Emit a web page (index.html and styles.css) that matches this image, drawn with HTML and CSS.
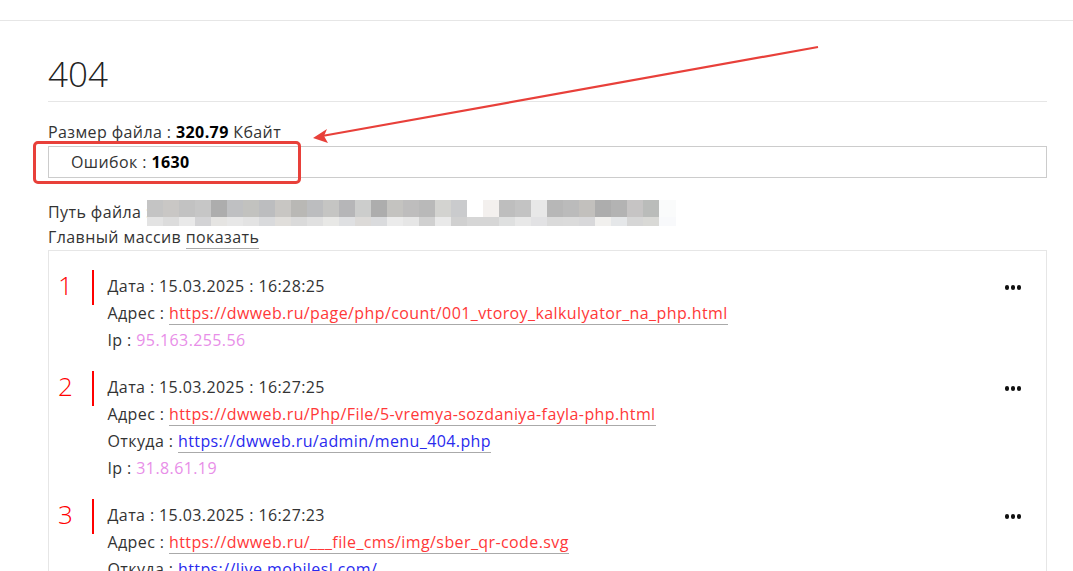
FILE: index.html
```html
<!DOCTYPE html>
<html lang="ru">
<head>
  <meta charset="UTF-8" />
  <title>404 — журнал ошибок</title>
  <link rel="stylesheet" href="styles.css">
</head>
<body>
  <div class="topbar"></div>

  <div class="page">
    <h1 class="title">404</h1>

    <div class="line">Размер файла : <b>320.79</b> Кбайт</div>
    <div class="errors">Ошибок : <b>1630</b></div>

    <div class="line path">Путь файла : <span class="blurred"></span></div>
    <div class="line">Главный массив <a class="show" href="#">показать</a></div>

    <div class="list">
      <div class="item">
        <div class="num">1</div>
        <div class="bar"></div>
        <div class="info">
          <div class="row">Дата : 15.03.2025 : 16:28:25</div>
          <div class="row">Адрес : <a class="addr" href="#">https://dwweb.ru/page/php/count/001_vtoroy_kalkulyator_na_php.html</a></div>
          <div class="row">Ip : <span class="ip">95.163.255.56</span></div>
        </div>
        <div class="more"><i></i><i></i><i></i></div>
      </div>

      <div class="item">
        <div class="num">2</div>
        <div class="bar"></div>
        <div class="info">
          <div class="row">Дата : 15.03.2025 : 16:27:25</div>
          <div class="row">Адрес : <a class="addr" href="#">https://dwweb.ru/Php/File/5-vremya-sozdaniya-fayla-php.html</a></div>
          <div class="row">Откуда : <a class="from" href="#">https://dwweb.ru/admin/menu_404.php</a></div>
          <div class="row">Ip : <span class="ip">31.8.61.19</span></div>
        </div>
        <div class="more"><i></i><i></i><i></i></div>
      </div>

      <div class="item">
        <div class="num">3</div>
        <div class="bar"></div>
        <div class="info">
          <div class="row">Дата : 15.03.2025 : 16:27:23</div>
          <div class="row">Адрес : <a class="addr" href="#">https://dwweb.ru/___file_cms/img/sber_qr-code.svg</a></div>
          <div class="row">Откуда : <a class="from" href="#">https://live.mobilesl.com/</a></div>
          <div class="row">Ip : <span class="ip">5.255.231.98</span></div>
        </div>
        <div class="more"><i></i><i></i><i></i></div>
      </div>
    </div>
  </div>

  <!-- пометки поверх скриншота -->
  <div class="mark-box"></div>
  <svg class="mark-arrow" width="1073" height="200" viewBox="0 0 1073 200">
    <line x1="818" y1="47" x2="322" y2="136" stroke="#e8403a" stroke-width="2.2" />
    <path d="M313 138 L327 129 L324 136 L328 143 Z" fill="#e8403a" />
  </svg>
</body>
</html>
```

FILE: styles.css
```css
body {
  margin: 0;
  font-family: "Open Sans", sans-serif;
  font-size: 16px;
  letter-spacing: 0.4px;
  color: #333;
  background: #fff;
}
a {
  text-decoration: none;
}
.topbar {
  height: 20px;
  border-bottom: 1px solid #e6e6e6;
}
.page {
  padding: 0 26px 0 48px;
}
.title {
  margin: 34px 0 0;
  padding-bottom: 8px;
  font-size: 35px;
  font-weight: 300;
  letter-spacing: 0;
  line-height: 38px;
  color: #222;
  border-bottom: 1px solid #e6e6e6;
}
.line {
  line-height: 25px;
}
.title + .line {
  margin-top: 18px;
}
.line b, .errors b {
  font-weight: 700;
  color: #000;
}
.errors {
  margin-top: 1px;
  height: 30px;
  line-height: 30px;
  padding-left: 22px;
  border: 1px solid #ccc;
}
.path {
  margin-top: 22px;
  height: 25px;
  display: flex;
  align-items: center;
}
.blurred {
  flex-shrink: 0;
  width: 529px;
  height: 26px;
  margin-left: -4px;
  background:
    linear-gradient(to right,
      #e3e3e3 0 16px, #dcdcdc 16px 32px, #e9e9e9 32px 48px, #d3d3d5 48px 64px,
      #e5e4e2 64px 80px, #e7e7e7 80px 96px, #e3e3e3 96px 112px, #d9dadc 112px 128px,
      #e0dedb 128px 144px, #dadada 144px 160px, #e0e0e0 160px 176px, #e8e8e6 176px 192px,
      #dfe0e2 192px 208px, #dcdad8 208px 224px, #dadbdd 224px 240px, #ebebeb 240px 256px,
      #e6e6e6 256px 272px, #d0d0d0 272px 288px, #e9e9e9 288px 304px, #d0d0d0 304px 320px,
      #d6d6d6 320px 352px, #dfe0e0 352px 368px, #e8e8e8 368px 384px, #e2e2e4 384px 400px,
      #dadada 400px 416px, #dbdbdb 416px 432px, #d8d8da 432px 448px, #f1f0ee 448px 464px,
      #e5e7e9 464px 480px, #d6d6d6 480px 496px, #d9d9d6 496px 512px, #f8f9fb 512px 529px)
      bottom / 100% 9px no-repeat,
    linear-gradient(to right,
      #c4c4c4 0 16px, #c9c7c5 16px 32px, #c2c2c2 32px 48px, #c6c6c6 48px 64px,
      #adadad 64px 80px, #bfc0c2 80px 96px, #c2c2bf 96px 112px, #bcbdbf 112px 128px,
      #c8c6c3 128px 144px, #b9b8b5 144px 160px, #bcbdbf 160px 176px, #c5c5c3 176px 192px,
      #b6b6b8 192px 208px, #cccdcc 208px 224px, #adadad 224px 240px, #c4c3c0 240px 256px,
      #bebdbd 256px 272px, #b9b9b9 272px 288px, #d3d3d0 288px 304px, #cacbcd 304px 320px,
      #ffffff 320px 336px, #f3f0ee 336px 352px, #bebebe 352px 368px, #c3c3c3 368px 384px,
      #e8e8e8 384px 400px, #b7b7b7 400px 416px, #bbbbbb 416px 432px, #c2c0bd 432px 448px,
      #adadad 448px 464px, #b3b3b3 464px 480px, #c6c4c4 480px 496px, #babcba 496px 512px,
      #fafbfb 512px 529px)
      top / 100% 17px no-repeat;
}
.show {
  color: #333;
  border-bottom: 1px solid #aaa;
}
.list {
  border: 1px solid #e6e6e6;
  border-bottom: none;
  padding: 20px 25px 0 9px;
}
.item {
  display: flex;
  align-items: flex-start;
  padding-bottom: 18px;
}
.num {
  width: 34px;
  font-size: 26px;
  font-weight: 300;
  letter-spacing: 0;
  line-height: 28px;
  color: #f00;
}
.bar {
  width: 1.5px;
  height: 35px;
  margin-top: -1px;
  background: #f00;
}
.info {
  flex: 1;
  padding-left: 14px;
  padding-top: 2px;
}
.row {
  line-height: 27px;
}
.addr {
  color: #ff3838;
  border-bottom: 1px solid #aaa;
}
.from {
  color: #2a2aee;
  border-bottom: 1px solid #aaa;
}
.ip {
  color: #e88ee8;
}
.more {
  display: flex;
  gap: 1.5px;
  padding-top: 14px;
}
.more i {
  width: 4.5px;
  height: 4.5px;
  border-radius: 50%;
  background: #111;
}
.mark-box {
  position: absolute;
  left: 33px;
  top: 141px;
  width: 262px;
  height: 37px;
  border: 3px solid #e8403a;
  border-radius: 5px;
}
.mark-arrow {
  position: absolute;
  left: 0;
  top: 0;
  pointer-events: none;
}
```
